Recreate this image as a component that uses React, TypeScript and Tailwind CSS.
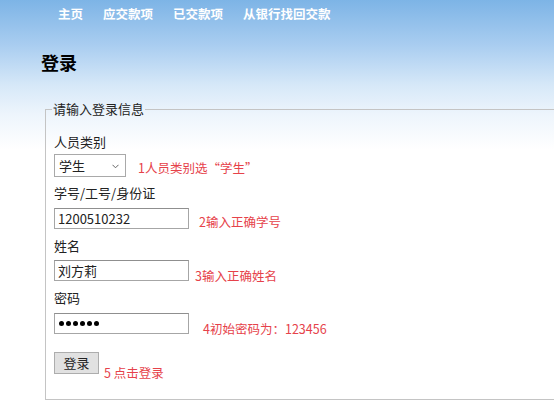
import React from "react";

const font = "font-['Microsoft_YaHei','Noto_Sans_CJK_SC','Noto_Sans',sans-serif]";

function Hint({ text, className }: { text: string; className: string }) {
  return <span className={`text-[12.5px] leading-[16px] text-[#e6424a] ${className}`}>{text}</span>;
}

export default function App() {
  return (
    <div
      className={`min-h-screen w-[554px] overflow-hidden bg-[linear-gradient(to_bottom,#7db4e6_0px,#a9cdf0_45px,#d6e8f8_85px,#eef5fc_115px,#ffffff_150px)] text-[#222] ${font}`}
    >
      <nav className="flex h-[23px] gap-[20px] pl-[58px] pt-[5px] text-[12.5px] font-bold leading-[18px] text-white">
        <span>主页</span>
        <span>应交款项</span>
        <span>已交款项</span>
        <span>从银行找回交款</span>
      </nav>

      <h1 className="ml-[41px] mt-[27px] text-[18px] font-bold leading-[24px] text-black">登录</h1>

      <fieldset className="ml-[45px] mt-[26px] border border-r-0 border-[#c4c4c4] pb-[25px] pl-[8px] text-[13px]">
        <legend className="ml-[-2px] px-[1px] leading-[18px]">请输入登录信息</legend>

        <div className="mt-[15px] leading-[18px]">人员类别</div>
        <div className="mt-[3px] flex items-end">
          <div className="relative flex h-[23px] w-[72px] items-center border border-[#a9a9a9] bg-white pl-[4px]">
            <span>学生</span>
            <svg className="absolute right-[6px] top-[9px]" width="7" height="5" viewBox="0 0 7 5">
              <path d="M0.5 0.8 L3.5 3.8 L6.5 0.8" fill="none" stroke="#666" strokeWidth="1" />
            </svg>
          </div>
          <Hint text="1人员类别选“学生”" className="mb-[1px] ml-[12px]" />
        </div>

        <div className="mt-[7px] leading-[18px]">学号/工号/身份证</div>
        <div className="mt-[6px] flex items-end">
          <input
            readOnly
            value="1200510232"
            className="h-[21px] w-[135px] border border-[#a6a6a6] border-t-[#8f8f8f] bg-white pl-[3px] text-[13px] outline-none"
          />
          <Hint text="2输入正确学号" className="ml-[10px] mb-[-1px]" />
        </div>

        <div className="mt-[8px] leading-[18px]">姓名</div>
        <div className="mt-[5px] flex items-end">
          <input
            readOnly
            value="刘方莉"
            className="h-[21px] w-[135px] border border-[#a6a6a6] border-t-[#8f8f8f] bg-white pl-[3px] text-[13px] outline-none"
          />
          <Hint text="3输入正确姓名" className="ml-[6px] mb-[-3px]" />
        </div>

        <div className="mt-[8px] leading-[18px]">密码</div>
        <div className="mt-[6px] flex items-end">
          <div className="flex h-[21px] w-[135px] items-center gap-[2px] border border-[#a6a6a6] border-t-[#8f8f8f] bg-white pl-[4px]">
            {[0, 1, 2, 3, 4, 5].map((i) => (
              <span key={i} className="h-[5px] w-[5px] rounded-full bg-black" />
            ))}
          </div>
          <Hint text="4初始密码为：123456" className="ml-[14px] mb-[-3px]" />
        </div>

        <div className="mt-[18px] flex items-end">
          <button className="h-[22px] w-[45px] border border-[#adadad] bg-[#e1e1e1] text-[13px] leading-[18px]">
            登录
          </button>
          <Hint text="5 点击登录" className="ml-[5px] mb-[-7px]" />
        </div>
      </fieldset>
    </div>
  );
}
